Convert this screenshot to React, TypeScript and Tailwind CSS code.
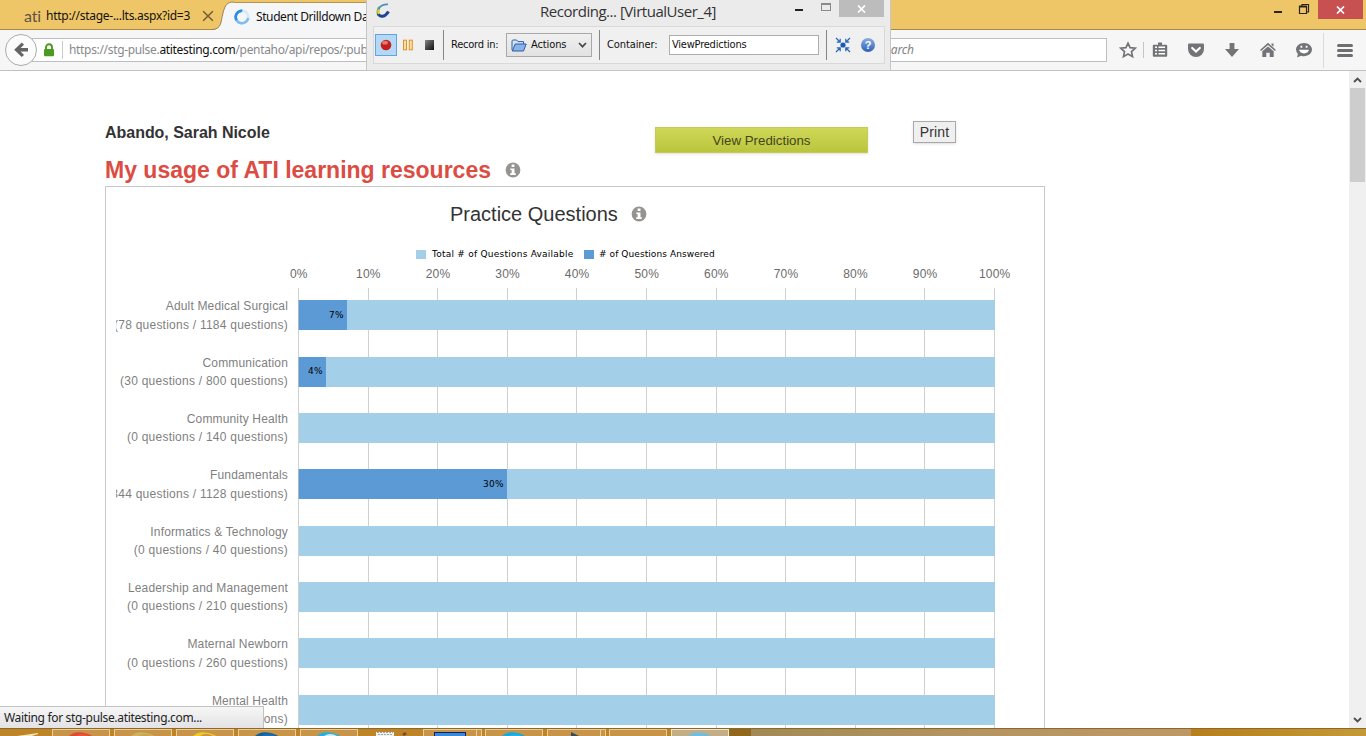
import type { ReactNode } from "react";

const subjects = [
  { name: "Adult Medical Surgical", detail: "(78 questions / 1184 questions)", pct: 7 },
  { name: "Communication", detail: "(30 questions / 800 questions)", pct: 4 },
  { name: "Community Health", detail: "(0 questions / 140 questions)", pct: 0 },
  { name: "Fundamentals", detail: "(344 questions / 1128 questions)", pct: 30 },
  { name: "Informatics & Technology", detail: "(0 questions / 40 questions)", pct: 0 },
  { name: "Leadership and Management", detail: "(0 questions / 210 questions)", pct: 0 },
  { name: "Maternal Newborn", detail: "(0 questions / 260 questions)", pct: 0 },
  { name: "Mental Health", detail: "(0 questions / 240 questions)", pct: 0 },
];

const ticks = [0, 10, 20, 30, 40, 50, 60, 70, 80, 90, 100];

function InfoIcon() {
  return (
    <svg width="16" height="16" viewBox="0 0 16 16" className="shrink-0">
      <circle cx="8" cy="8" r="7.4" fill="#969290" />
      <path d="M6.6 2.6h2.9v2.5H6.6zM5.3 6.4h4.2v4.8h1.3v1.7H5.2v-1.7h1.4V8.1H5.3z" fill="#fff" />
    </svg>
  );
}

function TabStrip() {
  return (
    <div className="flex h-[30px] shrink-0 items-stretch border-b border-[#a58a4b] bg-[#efc667]">
      <div className="-mr-[4px] flex w-[216px] shrink-0 items-center pl-[24px] pt-[2px]">
        <span className="w-[22px] shrink-0 font-['Lato',sans-serif] text-[16px] leading-[20px] tracking-[-0.2px] text-[#5d5346]">ati</span>
        <span className="w-[156px] shrink-0 whitespace-nowrap font-['Noto_Sans',sans-serif] text-[12px] leading-[16px] tracking-[-0.27px] text-[#111]">
          http://stage-...lts.aspx?id=3
        </span>
        <svg width="12" height="12" viewBox="0 0 12 12" className="shrink-0">
          <path d="M1.2 1.2 10.8 10.8M10.8 1.2 1.2 10.8" stroke="#6c5a35" strokeWidth="1.4" />
        </svg>
      </div>
      <div className="flex h-[30px] w-[170px] shrink-0">
        <svg width="22" height="30" viewBox="0 0 22 30" className="shrink-0">
          <path d="M0 30C10 29.5 8.500 22 11 13 13 5 15 2 22 2V30z" fill="#f5f6f7" />
          <path d="M0 29.500C10 29 8.500 22 11 13 13 5 15 2 22 2" fill="none" stroke="#9b8350" />
        </svg>
        <div className="mt-[2px] flex h-[28px] flex-1 items-center border-t border-[#b39454] bg-[#f5f6f7]">
          <svg width="16" height="16" viewBox="0 0 16 16" className="shrink-0">
            <circle cx="8" cy="8" r="6.300" fill="none" stroke="#d7e9f8" strokeWidth="2.600" />
            <path d="M8.500 1.700A6.300 6.300 0 1 0 14.200 9" fill="none" stroke="#7fbcf0" strokeWidth="2.600" />
            <path d="M8 1.700A6.300 6.300 0 0 0 2.600 11.200" fill="none" stroke="#2b8ee6" strokeWidth="2.600" />
          </svg>
          <span className="ml-[6px] whitespace-nowrap font-['Noto_Sans',sans-serif] text-[12px] leading-[16px] tracking-[-0.4px] text-[#111]">
            Student Drilldown Data
          </span>
        </div>
      </div>
      <div className="flex flex-1 items-start justify-end">
        <svg width="50" height="20" viewBox="0 0 50 20">
          <path d="M2 12h8" stroke="#2c2517" strokeWidth="2" />
          <path d="M27.500 6.500h7v7h-7zM30 6V4.500h6.500V12H35" fill="none" stroke="#2c2517" strokeWidth="1.200" />
          <path d="M27 6.500h8" stroke="#2c2517" strokeWidth="2" />
        </svg>
        <div className="mr-[3px] -ml-[4px] flex h-[19px] w-[45px] items-center justify-center bg-[#c75050]">
          <svg width="9" height="8" viewBox="0 0 9 8">
            <path d="M1 .5 8 7.500M8 .5 1 7.500" stroke="#fff" strokeWidth="1.700" />
          </svg>
        </div>
      </div>
    </div>
  );
}

function ToolIcon({ width, children }: { width: string; children: ReactNode }) {
  return (
    <div className={"flex shrink-0 items-center justify-center " + width}>
      <svg width="18" height="18" viewBox="0 0 18 18">
        {children}
      </svg>
    </div>
  );
}

function Toolbar() {
  return (
    <div className="flex h-[41px] shrink-0 items-center border-b border-[#bfc1c4] bg-[#f6f6f7] font-['Noto_Sans',sans-serif]">
      <svg width="36" height="34" viewBox="0 0 36 34" className="z-[1] ml-[4px] shrink-0">
        <circle cx="17" cy="17" r="15.500" fill="#fbfbfb" stroke="#a9abae" />
        <path d="M10.200 16.800 17.800 9.600 20 11.700 16.600 15H24V18.600H16.600L20 21.900 17.800 24z" fill="#636466" />
      </svg>
      <div className="-ml-[8px] flex h-[24px] w-[1075px] shrink-0 items-center border border-[#bcbec1] bg-white">
        <svg width="12" height="14" viewBox="0 0 12 14" className="ml-[10px] shrink-0">
          <path d="M3 7V4.300a3 3 0 0 1 6 0V7" fill="none" stroke="#4a9b1f" strokeWidth="1.900" />
          <rect x="1" y="6" width="10" height="7.300" rx="1" fill="#4a9b1f" />
        </svg>
        <div className="ml-[7px] h-[18px] w-px bg-[#c9cbcd]" />
        <div className="ml-[6px] w-[801px] shrink-0 whitespace-nowrap text-[12px] leading-[16px] tracking-[-0.33px] text-[#87898b]">
          https://stg-pulse.<span className="text-[#111]">atitesting.com</span>/pentaho/api/repos/:public
        </div>
        <div className="ml-[9px] shrink-0 text-[12px] italic leading-[16px] tracking-[-0.15px] text-[#808285]">Search</div>
      </div>
      <ToolIcon width="w-[42px]">
        <path d="M9 2.200 11.100 6.700 16.200 7.200 12.500 10.600 13.500 15.700 9 13.100 4.500 15.700 5.500 10.600 1.800 7.200 6.900 6.700z" fill="none" stroke="#737477" strokeWidth="1.700" />
      </ToolIcon>
      <div className="-ml-[6px] h-[16px] w-px shrink-0 bg-[#c4c6c8]" />
      <ToolIcon width="w-[31px]">
        <path d="M7 1.500h4v2.200h4.200q1 0 1 1v10q0 1-1 1H2.800q-1 0-1-1v-10q0-1 1-1H7z" fill="#737477" />
        <path d="M4 6.200h2M7.500 6.200H14M4 9.500h2M7.500 9.500H14M4 12.800h2M7.500 12.800H14" stroke="#fff" strokeWidth="1.600" />
      </ToolIcon>
      <ToolIcon width="w-[41px]">
        <path d="M2.300 2.500h13.400q1.300 0 1.300 1.300V8A8 8 0 0 1 1 8V3.800q0-1.300 1.300-1.300z" fill="#737477" />
        <path d="M5.200 7 9 10.600 12.800 7" fill="none" stroke="#fff" strokeWidth="2.200" strokeLinecap="round" />
      </ToolIcon>
      <ToolIcon width="w-[31px]">
        <path d="M6.600 2h4.800v6H16L9 16 2 8h4.600z" fill="#737477" />
      </ToolIcon>
      <ToolIcon width="w-[41px]">
        <path d="M9 1.800 17 9 15.900 10 9 4.100 2.100 10 1 9zM9 5.500 14.700 10.300V16H10.700V11.700H7.300V16H3.300V10.300zM12.500 2.500h2v3.200l-2-1.800z" fill="#737477" />
      </ToolIcon>
      <ToolIcon width="w-[31px]">
        <path d="M9 2c4.500 0 8 2.900 8 6.600s-3.500 6.600-8 6.600c-1 0-2-.1-2.900-.5L2 16.400l.9-3.500A6.300 6.300 0 0 1 1 8.600C1 4.900 4.500 2 9 2z" fill="#737477" />
        <path d="M4 8.800h10c-.6 2.200-2.400 3.600-5 3.600S4.600 11 4 8.800z" fill="#fff" />
        <path d="M6.400 4.700v2M11.600 4.700v2" stroke="#fff" strokeWidth="1.800" />
      </ToolIcon>
      <div className="ml-[4px] h-[35px] w-px shrink-0 bg-[#d9dadc]" />
      <div className="ml-[13px] flex w-[16px] shrink-0 flex-col gap-[2px]">
        <div className="h-[3px] rounded-sm bg-[#6d6e71]" />
        <div className="h-[3px] rounded-sm bg-[#6d6e71]" />
        <div className="h-[3px] rounded-sm bg-[#6d6e71]" />
      </div>
    </div>
  );
}

function RecorderWindow() {
  return (
    <div className="absolute left-[366px] top-0 flex h-[71px] w-[525px] flex-col border-x border-b border-[#c6c6c6] bg-[#ebebeb] font-['DejaVu_Sans_Condensed','DejaVu_Sans',sans-serif] text-[11px] tracking-[-0.22px] text-[#111]">
      <div className="flex h-[26px] shrink-0 items-start">
        <svg width="18" height="18" viewBox="0 0 18 18" className="ml-[8px] mt-[2px] shrink-0">
          <path d="M4.200 5C2.300 9 2.500 12 4 13.500" fill="none" stroke="#8bb646" strokeWidth="2.600" />
          <path d="M3.200 11.500C5 15.700 10 15.300 13.500 9.500" fill="none" stroke="#1c4695" strokeWidth="3" />
          <path d="M3.500 7C5.500 3.500 9 2.200 13 2.400" fill="none" stroke="#4d8fba" strokeWidth="1.800" />
          <path d="M3.400 8 4 12" stroke="#e4cf37" strokeWidth="2" />
        </svg>
        <div className="ml-[147px] w-[250px] shrink-0 whitespace-nowrap font-['Open_Sans',sans-serif] text-[15px] leading-[23px] tracking-[-0.47px] text-[#333]">
          Recording... [VirtualUser_4]
        </div>
        <div className="ml-[5px] mt-[9px] h-[2px] w-[8px] shrink-0 bg-[#222]" />
        <div className="ml-[18px] mt-[3px] h-[8px] w-[10px] shrink-0 border border-t-2 border-[#8b8b8b]" />
        <div className="ml-[8px] flex h-[17px] w-[45px] shrink-0 items-center justify-center bg-[#bcbcbc]">
          <svg width="9" height="8" viewBox="0 0 9 8">
            <path d="M1 .5 8 7.500M8 .5 1 7.500" stroke="#fff" strokeWidth="1.700" />
          </svg>
        </div>
      </div>
      <div className="ml-[6px] flex h-[38px] w-[512px] items-center border border-[#d9d9d9] bg-[#f0f0f0]">
        <div className="ml-[1px] flex h-[22px] w-[22px] shrink-0 items-center justify-center border border-[#62a5dc] bg-[#b5d8f6]">
          <svg width="12" height="12" viewBox="0 0 12 12">
            <circle cx="6" cy="6" r="5.300" fill="#c3201c" />
            <ellipse cx="5" cy="3.700" rx="3" ry="1.900" fill="#e27870" />
          </svg>
        </div>
        <svg width="12" height="12" viewBox="0 0 12 12" className="ml-[5px] shrink-0">
          <rect x="1.500" y="1.200" width="3" height="9.600" fill="#ffe19a" stroke="#dc922c" />
          <rect x="7.300" y="1.200" width="3" height="9.600" fill="#ffe19a" stroke="#dc922c" />
        </svg>
        <div className="ml-[11px] h-[10px] w-[9px] shrink-0 bg-linear-to-br from-[#8a8a8a] to-[#111]" />
        <div className="ml-[9px] h-[30px] w-px shrink-0 bg-[#858585]" />
        <div className="ml-[7px] w-[55px] shrink-0 whitespace-nowrap leading-[14px]">Record in:</div>
        <div className="flex h-[24px] w-[86px] shrink-0 items-center border border-[#a8a8a8] bg-linear-to-b from-[#f0f0f0] to-[#e2e2e2]">
          <svg width="16" height="13" viewBox="0 0 16 13" className="ml-[4px] shrink-0">
            <path d="M1 11V2.200Q1 1 2.200 1H5.600L7 2.600H12.500V5" fill="#d3e4fa" stroke="#2f5ca6" />
            <path d="M1.300 12 4.200 5H15.200L12.500 12z" fill="#8ab2eb" stroke="#2f5ca6" />
          </svg>
          <span className="ml-[4px] w-[47px] shrink-0 leading-[14px] tracking-[-0.1px]">Actions</span>
          <svg width="9" height="6" viewBox="0 0 9 6" className="shrink-0">
            <path d="M1 1 4.500 4.700 8 1" fill="none" stroke="#4a4a4a" strokeWidth="1.700" />
          </svg>
        </div>
        <div className="ml-[7px] h-[30px] w-px shrink-0 bg-[#858585]" />
        <div className="ml-[7px] w-[62px] shrink-0 whitespace-nowrap leading-[14px] tracking-[-0.1px]">Container:</div>
        <div className="flex h-[20px] w-[150px] shrink-0 items-center border border-[#adadad] bg-white pl-[2px] leading-[14px]">ViewPredictions</div>
        <div className="ml-[7px] h-[30px] w-px shrink-0 bg-[#858585]" />
        <svg width="16" height="16" viewBox="0 0 16 16" className="ml-[8px] shrink-0">
          <circle cx="8" cy="8" r="2.600" fill="#1b5ab3" />
          <path d="M1 1 5 5M5.200 1.800V5.200H1.800M15 1 11 5M10.800 1.800V5.200H14.200M1 15 5 11M5.200 14.200V10.800H1.800M15 15 11 11M10.800 14.200V10.800H14.200" fill="none" stroke="#2765b8" strokeWidth="1.200" />
        </svg>
        <div className="ml-[10px] flex h-[14px] w-[14px] shrink-0 items-center justify-center rounded-full bg-linear-to-b from-[#8caee0] to-[#2d5fb4] font-['Liberation_Sans',sans-serif] text-[11px] font-bold leading-[14px] text-white">
          ?
        </div>
      </div>
    </div>
  );
}

function Chart() {
  return (
    <div className="ml-[105px] flex w-[940px] flex-1 flex-col overflow-hidden border-x border-t border-[#c8c8c8]">
      <div className="flex h-[54px] shrink-0 items-center pl-[344px]">
        <h2 className="w-[180.5px] shrink-0 whitespace-nowrap text-[20px] leading-[24px] text-[#333]">Practice Questions</h2>
        <InfoIcon />
      </div>
      <div className="flex h-[27px] shrink-0 items-center whitespace-nowrap pl-[310px] font-['DejaVu_Sans',sans-serif] text-[9px] text-black">
        <div className="h-[9px] w-[10px] bg-[#a3cfe9]" />
        <div className="ml-[6px] w-[152px] tracking-[0.24px]">Total # of Questions Available</div>
        <div className="h-[9px] w-[10px] bg-[#5b9ad5]" />
        <div className="ml-[5px] tracking-[0.08px]">{"# of Questions Answered"}</div>
      </div>
      <div className="ml-[158px] flex h-[20px] shrink-0 text-[12px] leading-[13px] text-[#6b6b6b]">
        {ticks.map((t) => (
          <div key={t} className="w-[69.6px] shrink-0 text-center tracking-[0.2px]">{t}%</div>
        ))}
      </div>
      <div className="grid min-h-0 flex-1 grid-cols-[192px_697px]">
        <div className="col-start-2 row-start-1 flex justify-between">
          {ticks.map((t) => (
            <div key={t} className="w-px bg-[#d0d0d0]" />
          ))}
        </div>
        <div className="col-span-2 col-start-1 row-start-1 pt-[12.4px]">
          {subjects.map((s) => (
            <div key={s.name} className="flex h-[56.33px] items-start">
              <div className="-mt-[3px] ml-[10px] flex w-[182px] shrink-0 flex-col items-end overflow-hidden pr-[10px] text-[12px] leading-[18.2px] text-[#7f7f7f]">
                <div className="whitespace-nowrap tracking-[0.16px]">{s.name}</div>
                <div className="whitespace-nowrap tracking-[0.24px]">{s.detail}</div>
              </div>
              <div className="ml-[1px] h-[30px] w-[696px] shrink-0 bg-[#a3cfe9]">
                {s.pct > 0 && (
                  <div
                    className="-ml-[1px] flex h-full items-center justify-end overflow-hidden border-l border-[#a3b9cf] bg-[#5b9ad5] pt-px font-['DejaVu_Sans',sans-serif] text-[9px] tracking-[0.25px] text-black"
                    style={{ width: s.pct + "%" }}
                  >
                    <span className="pr-[3px]">{s.pct}%</span>
                  </div>
                )}
              </div>
            </div>
          ))}
        </div>
      </div>
    </div>
  );
}

function TaskIcon({ color, accent }: { color: string; accent: string }) {
  return (
    <svg width="34" height="5" viewBox="0 0 34 5">
      <path d="M5 5Q10 0 18 1.500T28 5z" fill={color} />
      <path d="M12 5Q18 1 25 5z" fill={accent} />
    </svg>
  );
}

function TaskButton({ children }: { children?: ReactNode }) {
  return (
    <div className="flex h-[7px] w-[58px] shrink-0 items-end justify-center border-x border-t border-[#edcd91] bg-[#c8944a]">{children}</div>
  );
}

function Taskbar() {
  return (
    <div className="flex h-[8px] shrink-0 items-end overflow-hidden border-t border-[#8d682c] bg-[#bd8428]">
      <svg width="52" height="7" viewBox="0 0 52 7" className="shrink-0">
        <path d="M17 7 38 4V5L32 7z" fill="#f4e5bd" />
      </svg>
      <div className="flex shrink-0 gap-[4px]">
        <TaskButton><TaskIcon color="#df4b32" accent="#e9573a" /></TaskButton>
        <TaskButton><TaskIcon color="#cdb261" accent="#c9a551" /></TaskButton>
        <TaskButton><TaskIcon color="#efc928" accent="#c8944a" /></TaskButton>
        <TaskButton><TaskIcon color="#17619b" accent="#1c70b1" /></TaskButton>
        <TaskButton><TaskIcon color="#23afe3" accent="#d2eef7" /></TaskButton>
      </div>
      <svg width="65" height="7" viewBox="0 0 65 7" className="shrink-0">
        <path d="M18 3H36V7H18z" fill="#f4f2eb" />
        <path d="M19 3.500H35M20 5.500H34" stroke="#9ba4af" strokeDasharray="2 1" />
        <path d="M44 5 47 3 49 5 46 7z" fill="#78502b" />
      </svg>
      <div className="flex h-[7px] w-[54px] shrink-0 items-end justify-center border border-b-0 border-[#edcd91] bg-[#c8944a]">
        <div className="h-[4px] w-[32px] border-x border-t border-[#10235f] bg-[#3789db]" />
      </div>
      <div className="mr-[3px] h-[7px] w-[5px] shrink-0 border-r border-t border-[#edcd91] bg-[#c8944a]" />
      <TaskButton><TaskIcon color="#17a8df" accent="#1fb3e8" /></TaskButton>
      <div className="ml-[4px] flex h-[7px] w-[54px] shrink-0 items-end justify-center border-x border-t border-[#edcd91] bg-[#c8944a]">
        <svg width="20" height="5" viewBox="0 0 20 5"><path d="M7 5V1L15 5z" fill="#314b62" /></svg>
      </div>
      <div className="mr-[3px] h-[7px] w-[5px] shrink-0 border-r border-t border-[#edcd91] bg-[#c8944a]" />
      <TaskButton />
      <div className="ml-[4px] flex h-[7px] w-[58px] shrink-0 items-end justify-center border-x border-t border-[#f3e8cd] bg-[#c4ae88]">
        <TaskIcon color="#70bddd" accent="#70bddd" />
      </div>
      <div className="h-[7px] w-[22px] shrink-0 bg-[#91671d]" />
      <div className="h-[7px] w-[440px] shrink-0 bg-linear-to-r from-[#a18a57] via-[#b49462] to-[#bd9864]" />
      <div className="h-[7px] flex-1 bg-linear-to-r from-[#b67e1c] to-[#c39a37]" />
    </div>
  );
}

export default function App() {
  return (
    <div className="relative flex h-[736px] w-[1366px] flex-col overflow-hidden bg-white font-['Liberation_Sans',Arial,sans-serif]">
      <TabStrip />
      <Toolbar />
      <div className="flex min-h-0 flex-1">
        <main className="flex min-w-0 flex-1 flex-col pt-[50px]">
          <div className="flex h-[32px] shrink-0 items-start pl-[105px]">
            <div className="w-[550px] shrink-0 whitespace-nowrap text-[16px] font-bold leading-[24px] tracking-[-0.03px] text-[#333]">Abando, Sarah Nicole</div>
            <button className="mt-[6px] h-[26px] w-[213px] shrink-0 border border-[#c3ca55] bg-linear-to-b from-[#cfd857] to-[#bbc53b] pt-px text-[13.3px] leading-[23px] text-[#43451f] shadow-sm">
              View Predictions
            </button>
            <button className="ml-[45px] flex h-[22px] w-[43px] shrink-0 items-center justify-center border border-[#a9a9a9] bg-[#efefef] text-[14px] leading-[20px] tracking-[0.1px] text-[#333] shadow-sm">Print</button>
          </div>
          <div className="flex h-[33px] shrink-0 items-center pl-[105px]">
            <h1 className="w-[399.5px] shrink-0 whitespace-nowrap text-[23px] font-bold leading-[28px] text-[#dc4c43]">My usage of ATI learning resources</h1>
            <InfoIcon />
          </div>
          <Chart />
        </main>
        <div className="flex w-[17px] shrink-0 flex-col items-center bg-[#f0f0f0]">
          <svg width="9" height="17" viewBox="0 0 9 17"><path d="M1 11 4.500 7.500 8 11" fill="none" stroke="#505050" strokeWidth="1.900" /></svg>
          <div className="h-[94px] w-[15px] bg-[#cdcdcd]" />
          <div className="flex-1" />
          <svg width="9" height="17" viewBox="0 0 9 17"><path d="M1 7 4.500 10.500 8 7" fill="none" stroke="#505050" strokeWidth="1.900" /></svg>
        </div>
      </div>
      <Taskbar />
      <RecorderWindow />
      <div className="absolute bottom-[8px] left-0 flex h-[22px] w-[264px] items-center border-r border-t border-[#c2c2c2] bg-linear-to-b from-[#f6f6f6] to-[#e3e3e5] pl-[4px] font-['Noto_Sans',sans-serif] text-[12px] leading-[16px] tracking-[-0.33px] text-[#222]">
        Waiting for stg-pulse.atitesting.com...
      </div>
    </div>
  );
}
